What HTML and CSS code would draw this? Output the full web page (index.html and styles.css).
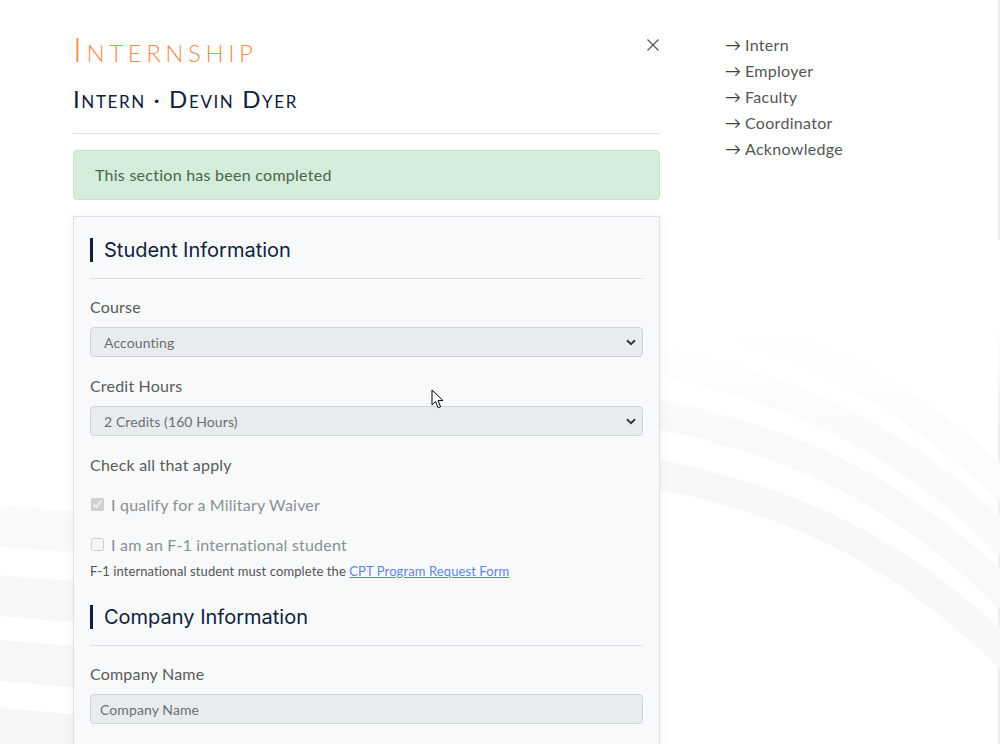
FILE: index.html
```html
<!DOCTYPE html>
<html lang="en">
<head>
<meta charset="utf-8">
<title>Internship</title>
<link rel="stylesheet" href="styles.css">
</head>
<body>
<svg class="bg-arcs" width="1000" height="744" viewBox="0 0 1000 744" aria-hidden="true">
  <defs>
    <linearGradient id="fade" x1="0" y1="0" x2="0" y2="1">
      <stop offset="0" stop-color="#fff" stop-opacity="1"/>
      <stop offset="1" stop-color="#fff" stop-opacity="0"/>
    </linearGradient>
    <linearGradient id="fade2" x1="0" y1="0" x2="0" y2="1">
      <stop offset="0" stop-color="#fff" stop-opacity="1"/>
      <stop offset="0.45" stop-color="#fff" stop-opacity="1"/>
      <stop offset="1" stop-color="#fff" stop-opacity="0"/>
    </linearGradient>
  </defs>
  <g fill="none" stroke-width="29">
    <path d="M600 296 C750 326 870 352 1020 502" stroke="#fbfbfb"/>
    <path d="M600 349 C750 379 870 405 1020 555" stroke="#fafafa"/>
    <path d="M600 402 C750 432 870 458 1020 608" stroke="#f9f9f9"/>
    <path d="M600 462 C750 492 870 518 1020 668" stroke="#f8f8f8"/>
  </g>
  <rect x="600" y="240" width="400" height="190" fill="url(#fade2)"/>
  <g fill="none" stroke-width="41">
    <path d="M-10 525 L90 533" stroke="#f9f9f9"/>
    <path d="M-10 595 L90 603" stroke="#f8f8f8"/>
    <path d="M-10 660 L90 668" stroke="#f7f7f7"/>
    <path d="M-10 728 L90 736" stroke="#f6f6f6"/>
  </g>
  <rect x="0" y="470" width="80" height="50" fill="url(#fade)"/>
</svg>

<div class="page">
  <main class="main">
    <header class="header">
      <div class="titles">
        <h1 class="title">Internship</h1>
        <h2 class="subtitle">Intern · Devin Dyer</h2>
      </div>
      <button class="close" type="button" aria-label="Close">
        <svg width="12" height="12" viewBox="0 0 12 12"><path d="M0.5 0.5 L11.5 11.5 M11.5 0.5 L0.5 11.5" stroke="#555" stroke-width="1.2" fill="none"/></svg>
      </button>
    </header>

    <div class="alert">This section has been completed</div>

    <section class="card">
      <h3 class="section-title">Student Information</h3>
      <hr class="rule">
      <div class="field">
        <div class="label">Course</div>
        <div class="select"><span>Accounting</span><svg class="chev" width="10" height="7" viewBox="0 0 10 7"><path d="M1 1.2 L5 5.2 L9 1.2" stroke="#343a40" stroke-width="2" fill="none"/></svg></div>
      </div>
      <div class="field">
        <div class="label">Credit Hours</div>
        <div class="select"><span>2 Credits (160 Hours)</span><svg class="chev" width="10" height="7" viewBox="0 0 10 7"><path d="M1 1.2 L5 5.2 L9 1.2" stroke="#343a40" stroke-width="2" fill="none"/></svg></div>
      </div>
      <div class="field">
        <div class="label">Check all that apply</div>
      </div>
      <label class="check first"><input type="checkbox" checked disabled><span>I qualify for a Military Waiver</span></label>
      <label class="check"><input type="checkbox" disabled><span>I am an F-1 international student</span></label>
      <p class="help">F-1 international student must complete the <a href="#">CPT Program Request Form</a></p>

      <h3 class="section-title second">Company Information</h3>
      <hr class="rule">
      <div class="field">
        <div class="label">Company Name</div>
        <div class="input">Company Name</div>
      </div>
    </section>
  </main>

  <nav class="aside">
    <a href="#"><span class="arrow">→</span>Intern</a>
    <a href="#"><span class="arrow">→</span>Employer</a>
    <a href="#"><span class="arrow">→</span>Faculty</a>
    <a href="#"><span class="arrow">→</span>Coordinator</a>
    <a href="#"><span class="arrow">→</span>Acknowledge</a>
  </nav>
</div>

<svg class="cursor" width="14" height="22" viewBox="0 0 14 22" aria-hidden="true">
  <path d="M1 1 L1 16 L4.5 12.5 L7.2 18.8 L9.6 17.8 L7 11.6 L12 11.6 Z" fill="#fff" stroke="#000" stroke-width="1" stroke-linejoin="miter"/>
</svg>
</body>
</html>
```

FILE: styles.css
```css
* { box-sizing: border-box; }

html, body {
  margin: 0;
  padding: 0;
  background: #fff;
  height: 744px;
  overflow: hidden;
}

body {
  font-family: "Lato", "Noto Sans", sans-serif;
  color: #555;
  letter-spacing: 0.2px;
  position: relative;
  box-shadow: inset -2px 0 0 #efefef;
}

.bg-arcs {
  position: absolute;
  left: 0;
  top: 0;
  z-index: 0;
}

.page {
  position: relative;
  z-index: 1;
  display: flex;
  align-items: flex-start;
  padding-left: 73px;
}

.main {
  width: 587px;
  flex: none;
}

.header {
  display: flex;
  justify-content: space-between;
  align-items: flex-start;
  padding-top: 29px;
  padding-bottom: 19px;
  border-bottom: 1px solid #e2e4e7;
}

.title {
  margin: 0 0 15px 0;
  font-family: "Lato", sans-serif;
  font-weight: 300;
  font-variant: small-caps;
  font-size: 34px;
  line-height: 40px;
  color: #f78a4d;
  letter-spacing: 4.6px;
}

.subtitle {
  margin: 0;
  font-family: "Lato", sans-serif;
  font-weight: 400;
  font-variant: small-caps;
  font-size: 24px;
  line-height: 30px;
  color: #0f213c;
  letter-spacing: 1.6px;
}

.close {
  margin-top: 10px;
  border: 0;
  background: none;
  padding: 0;
  width: 12px;
  height: 12px;
  display: flex;
  margin-right: 1px;
}

.alert {
  margin-top: 16px;
  background: #d4edda;
  border: 1px solid #c3e6cb;
  border-radius: 4px;
  padding: 12px 21px;
  font-size: 16px;
  line-height: 24px;
  letter-spacing: 0.26px;
  color: #4a6549;
}

.card {
  margin-top: 16px;
  background: #f8f9fa;
  border: 1px solid #dee2e6;
  box-shadow: 0 0 10px rgba(0, 0, 0, 0.06);
  padding: 21px 16px 24px 16px;
  height: 540px;
}

.section-title {
  margin: 0;
  font-family: "Inter", "Noto Sans", sans-serif;
  font-weight: 400;
  font-size: 20px;
  line-height: 24px;
  letter-spacing: 0;
  color: #0f213c;
  border-left: 3px solid #0f213c;
  padding-left: 11px;
}

.section-title.second {
  margin-top: 25px;
}

.rule {
  margin: 16px 0 0 0;
  border: 0;
  border-top: 1px solid #dcdfe2;
  height: 0;
}

.field {
  margin-top: 17px;
}

.field + .field {
  margin-top: 18px;
}

.label {
  font-size: 16px;
  line-height: 22px;
  color: #5a5a5a;
}

.select,
.input {
  margin-top: 9px;
  height: 30px;
  background: #e9ecef;
  border: 1px solid #ced4da;
  border-radius: 4px;
  display: flex;
  align-items: center;
  justify-content: space-between;
  font-size: 14px;
  letter-spacing: 0.1px;
  color: #6a6f74;
}

.select {
  padding: 0 6px 0 13px;
}

.input {
  padding: 0 9px;
}

.chev {
  display: block;
}

.check {
  display: flex;
  align-items: center;
  margin-top: 18px;
  height: 22px;
  font-size: 16px;
  color: #8c8f92;
}

.check.first {
  margin-top: 17px;
}

.check input {
  margin: 0 7px 0 1px;
  width: 13px;
  height: 13px;
}

.help {
  margin: 7px 0 0 0;
  font-size: 13px;
  line-height: 18px;
  letter-spacing: 0.1px;
  color: #555;
}

.help a {
  color: #5d86e2;
  text-decoration: underline;
}

.aside {
  margin-left: 65px;
  padding-top: 32px;
  display: flex;
  flex-direction: column;
}

.aside a {
  font-size: 16px;
  line-height: 26px;
  letter-spacing: 0.3px;
  color: #555;
  text-decoration: none;
}

.arrow {
  display: inline-block;
  width: 20px;
  color: #444;
}

.cursor {
  position: absolute;
  left: 431px;
  top: 389px;
  z-index: 5;
}
```
